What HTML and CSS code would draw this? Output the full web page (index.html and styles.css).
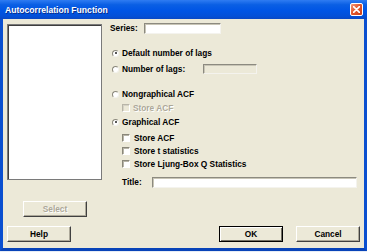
FILE: index.html
```html
<!DOCTYPE html>
<html>
<head>
<meta charset="utf-8">
<link rel="stylesheet" href="styles.css">
</head>
<body>
<div class="window">
  <div class="titlebar">
    <span class="title">Autocorrelation Function</span>
    <span class="close"><svg width="7" height="7" viewBox="0 0 7 7"><path d="M0.5 0.5L6.5 6.5M6.5 0.5L0.5 6.5" stroke="#fff" stroke-width="1.6" stroke-linecap="round"/></svg></span>
  </div>
  <div class="content">
    <div class="left">
      <div class="listbox"></div>
      <div class="btn select">Select</div>
      <div class="btn help">Help</div>
    </div>
    <div class="right">
      <div class="row series-row"><span class="series-label">Series:</span><span class="input series-input"></span></div>
      <div class="row g13 ind-radio"><span class="radio on"></span><span>Default number of lags</span></div>
      <div class="row g4 ind-radio"><span class="radio"></span><span class="lags-label">Number of lags:</span><span class="input disabled lags-input"></span></div>
      <div class="row g13 ind-radio"><span class="radio"></span><span>Nongraphical ACF</span></div>
      <div class="row g2 ind-check"><span class="check disabled"></span><span class="dis-text">Store ACF</span></div>
      <div class="row g2 ind-radio"><span class="radio on"></span><span>Graphical ACF</span></div>
      <div class="row g4 ind-check"><span class="check"></span><span>Store ACF</span></div>
      <div class="row g1 ind-check"><span class="check"></span><span>Store t statistics</span></div>
      <div class="row g1 ind-check"><span class="check"></span><span>Store Ljung-Box Q Statistics</span></div>
      <div class="row g6 ind-title"><span class="title-label">Title:</span><span class="input title-input"></span></div>
      <div class="actions">
        <div class="btn ok">OK</div>
        <div class="btn cancel">Cancel</div>
      </div>
    </div>
  </div>
</div>
</body>
</html>
```

FILE: styles.css
```css
html, body {
  margin: 0;
  padding: 0;
  background: #e6ecf5;
}
.window {
  width: 367px;
  height: 251px;
  box-sizing: border-box;
  background: #ece9d8;
  border-left: 3px solid #0a4fd0;
  border-right: 3px solid #0a4fd0;
  border-bottom: 3px solid #0843b8;
  display: flex;
  flex-direction: column;
  font-family: "Liberation Sans", Arial, sans-serif;
  font-weight: bold;
  font-size: 8.3px;
  color: #000;
}
.titlebar {
  height: 19px;
  margin: 0 -3px;
  padding: 0 3px 0 5px;
  display: flex;
  align-items: center;
  justify-content: space-between;
  background: linear-gradient(#2f7cf2 0%, #0a5fe4 25%, #0055e5 55%, #0350d8 85%, #0a48c4 100%);
  flex: none;
}
.title {
  color: #fff;
  font-size: 8.6px;
  font-weight: bold;
  text-shadow: 1px 1px 0 #0a2f8c;
}
.close {
  width: 13px;
  height: 13px;
  box-sizing: border-box;
  border: 1px solid #fff;
  border-radius: 2px;
  background: linear-gradient(135deg, #f39a7c 0%, #e2582f 45%, #cc3f17 100%);
  display: flex;
  align-items: center;
  justify-content: center;
  margin-right: 1px;
}
.close svg { display: block; }
.content {
  flex: 1;
  display: flex;
}
.left {
  width: 95px;
  margin-left: 4px;
  display: flex;
  flex-direction: column;
}
.listbox {
  margin-top: 5px;
  height: 156px;
  box-sizing: border-box;
  background: #fff;
  border: 1px solid #7a7a7a;
  box-shadow: inset 1px 1px 0 #3e3e3e;
}
.btn {
  width: 64px;
  height: 16px;
  box-sizing: border-box;
  display: flex;
  align-items: center;
  justify-content: center;
  background: #ece9d8;
  border: 1px solid;
  border-color: #fff #404040 #404040 #fff;
  box-shadow: inset -1px -1px 0 #aca899;
}
.select {
  margin-top: 21px;
  margin-left: 16px;
  color: #aca899;
  text-shadow: 1px 1px 0 #fff;
}
.help {
  margin-top: 9px;
}
.right {
  margin-left: 8px;
  width: 254px;
  display: flex;
  flex-direction: column;
}
.row {
  height: 12px;
  display: flex;
  align-items: center;
  flex: none;
}
.series-row { margin-top: 3px; }
.g1 { margin-top: 1px; }
.g2 { margin-top: 2px; }
.g4 { margin-top: 4px; }
.g6 { margin-top: 6px; }
.g13 { margin-top: 13px; }
.ind-radio { padding-left: 2px; }
.ind-check { padding-left: 12px; }
.ind-title { padding-left: 12px; }
.series-label { width: 34px; }
.input {
  height: 11px;
  box-sizing: border-box;
  background: #fff;
  border: 1px solid;
  border-color: #8c8a80 #f4f3ee #f4f3ee #8c8a80;
  box-shadow: inset 1px 1px 0 #c8c5b6;
}
.input.disabled {
  background: #ece9d8;
}
.series-input { width: 77px; }
.lags-label { width: 81px; }
.lags-input { width: 54px; height: 10px; }
.title-label { width: 30px; }
.title-input { width: 205px; }
.radio {
  width: 7px;
  height: 7px;
  box-sizing: border-box;
  border-radius: 50%;
  background: #fff;
  border: 1px solid;
  border-color: #8a877a #f4f3ee #f4f3ee #8a877a;
  margin-right: 3px;
  position: relative;
}
.radio.on::after {
  content: "";
  position: absolute;
  left: 1.5px;
  top: 1.5px;
  width: 2px;
  height: 2px;
  border-radius: 50%;
  background: #222;
}
.check {
  width: 8px;
  height: 8px;
  box-sizing: border-box;
  background: #fff;
  border: 1px solid;
  border-color: #8a877a #fff #fff #8a877a;
  box-shadow: inset 1px 1px 0 #b8b5a8;
  margin-right: 4px;
}
.check.disabled {
  background: #ece9d8;
  border-color: #b8b5a8 #fff #fff #b8b5a8;
  box-shadow: inset 1px 1px 0 #d6d3c6;
  margin-right: 3px;
}
.dis-text {
  color: #aca899;
  font-weight: bold;
  text-shadow: 1px 1px 0 #fff;
}
.actions {
  margin-top: 38px;
  display: flex;
  gap: 13px;
  padding-left: 109px;
}
.ok {
  border: 1px solid #000;
  box-shadow: inset 1px 1px 0 #fff, inset -1px -1px 0 #716f64;
}
```
